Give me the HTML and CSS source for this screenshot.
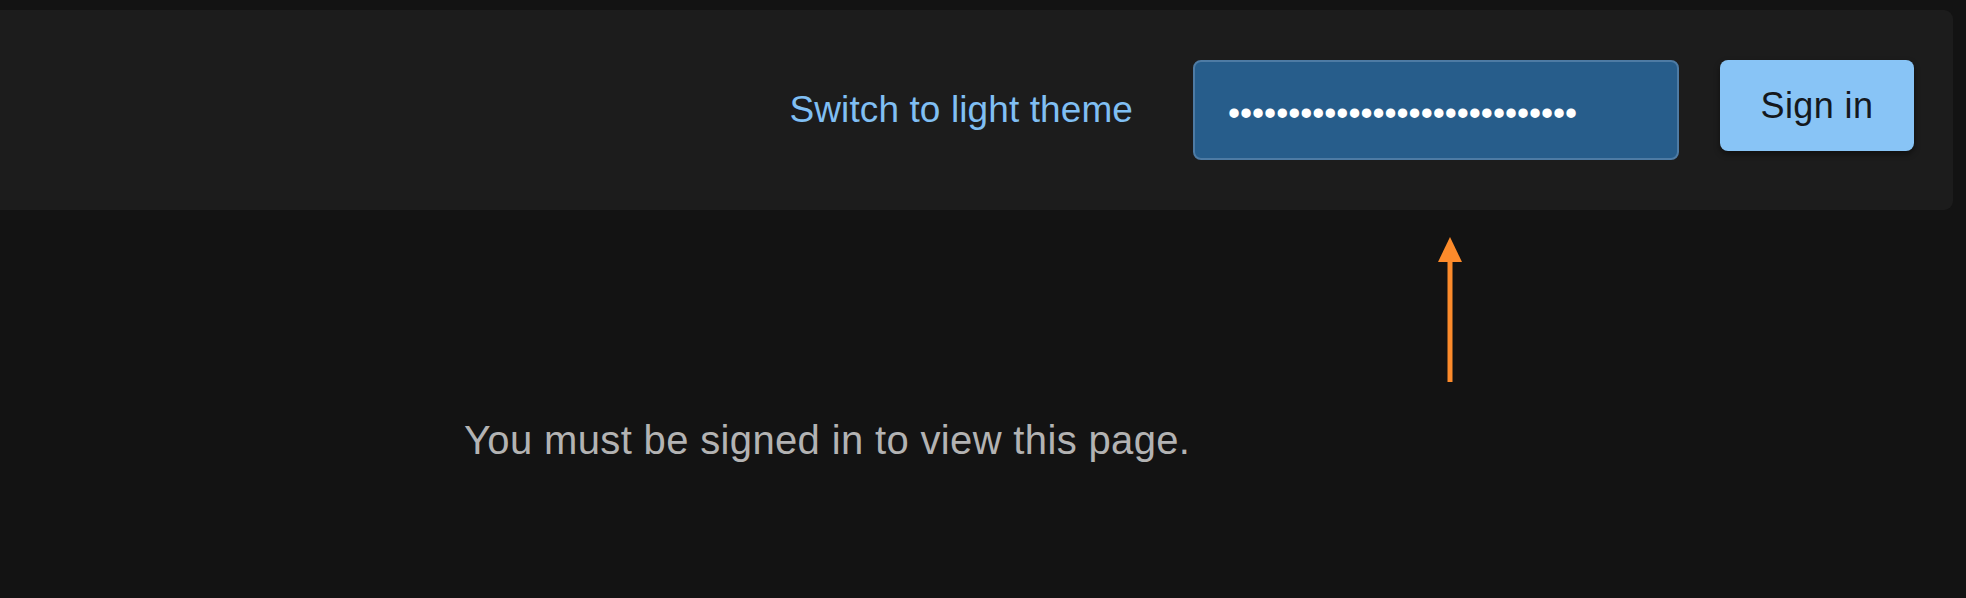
FILE: index.html
```html
<!DOCTYPE html>
<html lang="en">
<head>
<meta charset="utf-8">
<title>Sign in</title>
<link rel="stylesheet" href="styles.css">
</head>
<body>
<header class="topbar">
  <a class="theme-link" href="#">Switch to light theme</a>
  <input class="password" type="password" value="abcdefghijklmnopqrstuvwxyzabc" aria-label="Password">
  <button class="signin" type="button">Sign in</button>
</header>
<main class="content">
  <p class="notice">You must be signed in to view this page.</p>
</main>
<svg class="arrow" width="24" height="146" viewBox="0 0 24 146" aria-hidden="true">
  <polygon points="12,0 24,25 0,25" fill="#fd8b2b"/>
  <rect x="9.5" y="24" width="5" height="121" fill="#fd8b2b"/>
</svg>
</body>
</html>
```

FILE: styles.css
```css
html, body {
  margin: 0;
  padding: 0;
}
body {
  background: #131313;
  font-family: "Liberation Sans", Arial, Helvetica, sans-serif;
  width: 1966px;
  height: 598px;
  overflow: hidden;
  position: relative;
}
.topbar {
  margin: 10px 13px 0 0;
  height: 200px;
  box-sizing: border-box;
  background: #1c1c1c;
  border-radius: 0 9px 9px 0;
  display: flex;
  justify-content: flex-end;
  align-items: flex-start;
  padding: 50px 39px 50px 0;
}
.theme-link {
  color: #80bff3;
  text-decoration: none;
  font-size: 37px;
  letter-spacing: 0.1px;
  line-height: 100px;
  height: 100px;
  margin-right: 60px;
}
.password {
  box-sizing: border-box;
  width: 486px;
  height: 100px;
  margin: 0 41px 0 0;
  padding: 6px 0 0 33px;
  border: 2px solid #4e7ba4;
  border-radius: 8px;
  background: #275d8b;
  color: #ffffff;
  font-family: "Liberation Sans", Arial, sans-serif;
  font-size: 34.4px;
  outline: none;
}
.signin {
  box-sizing: border-box;
  width: 194px;
  height: 91px;
  border: none;
  border-radius: 8px;
  background: #88c4f6;
  color: #14181d;
  font-family: "Liberation Sans", Arial, sans-serif;
  font-size: 36px;
  letter-spacing: 0.4px;
  padding: 0;
  box-shadow: 0 3px 6px rgba(0, 0, 0, 0.45);
  cursor: pointer;
}
.content {
  padding: 207px 0 0 464px;
}
.notice {
  margin: 0;
  color: #b3b3b3;
  font-size: 40px;
  letter-spacing: 0.35px;
  line-height: 46px;
}
.arrow {
  position: absolute;
  left: 1438px;
  top: 237px;
}
```
